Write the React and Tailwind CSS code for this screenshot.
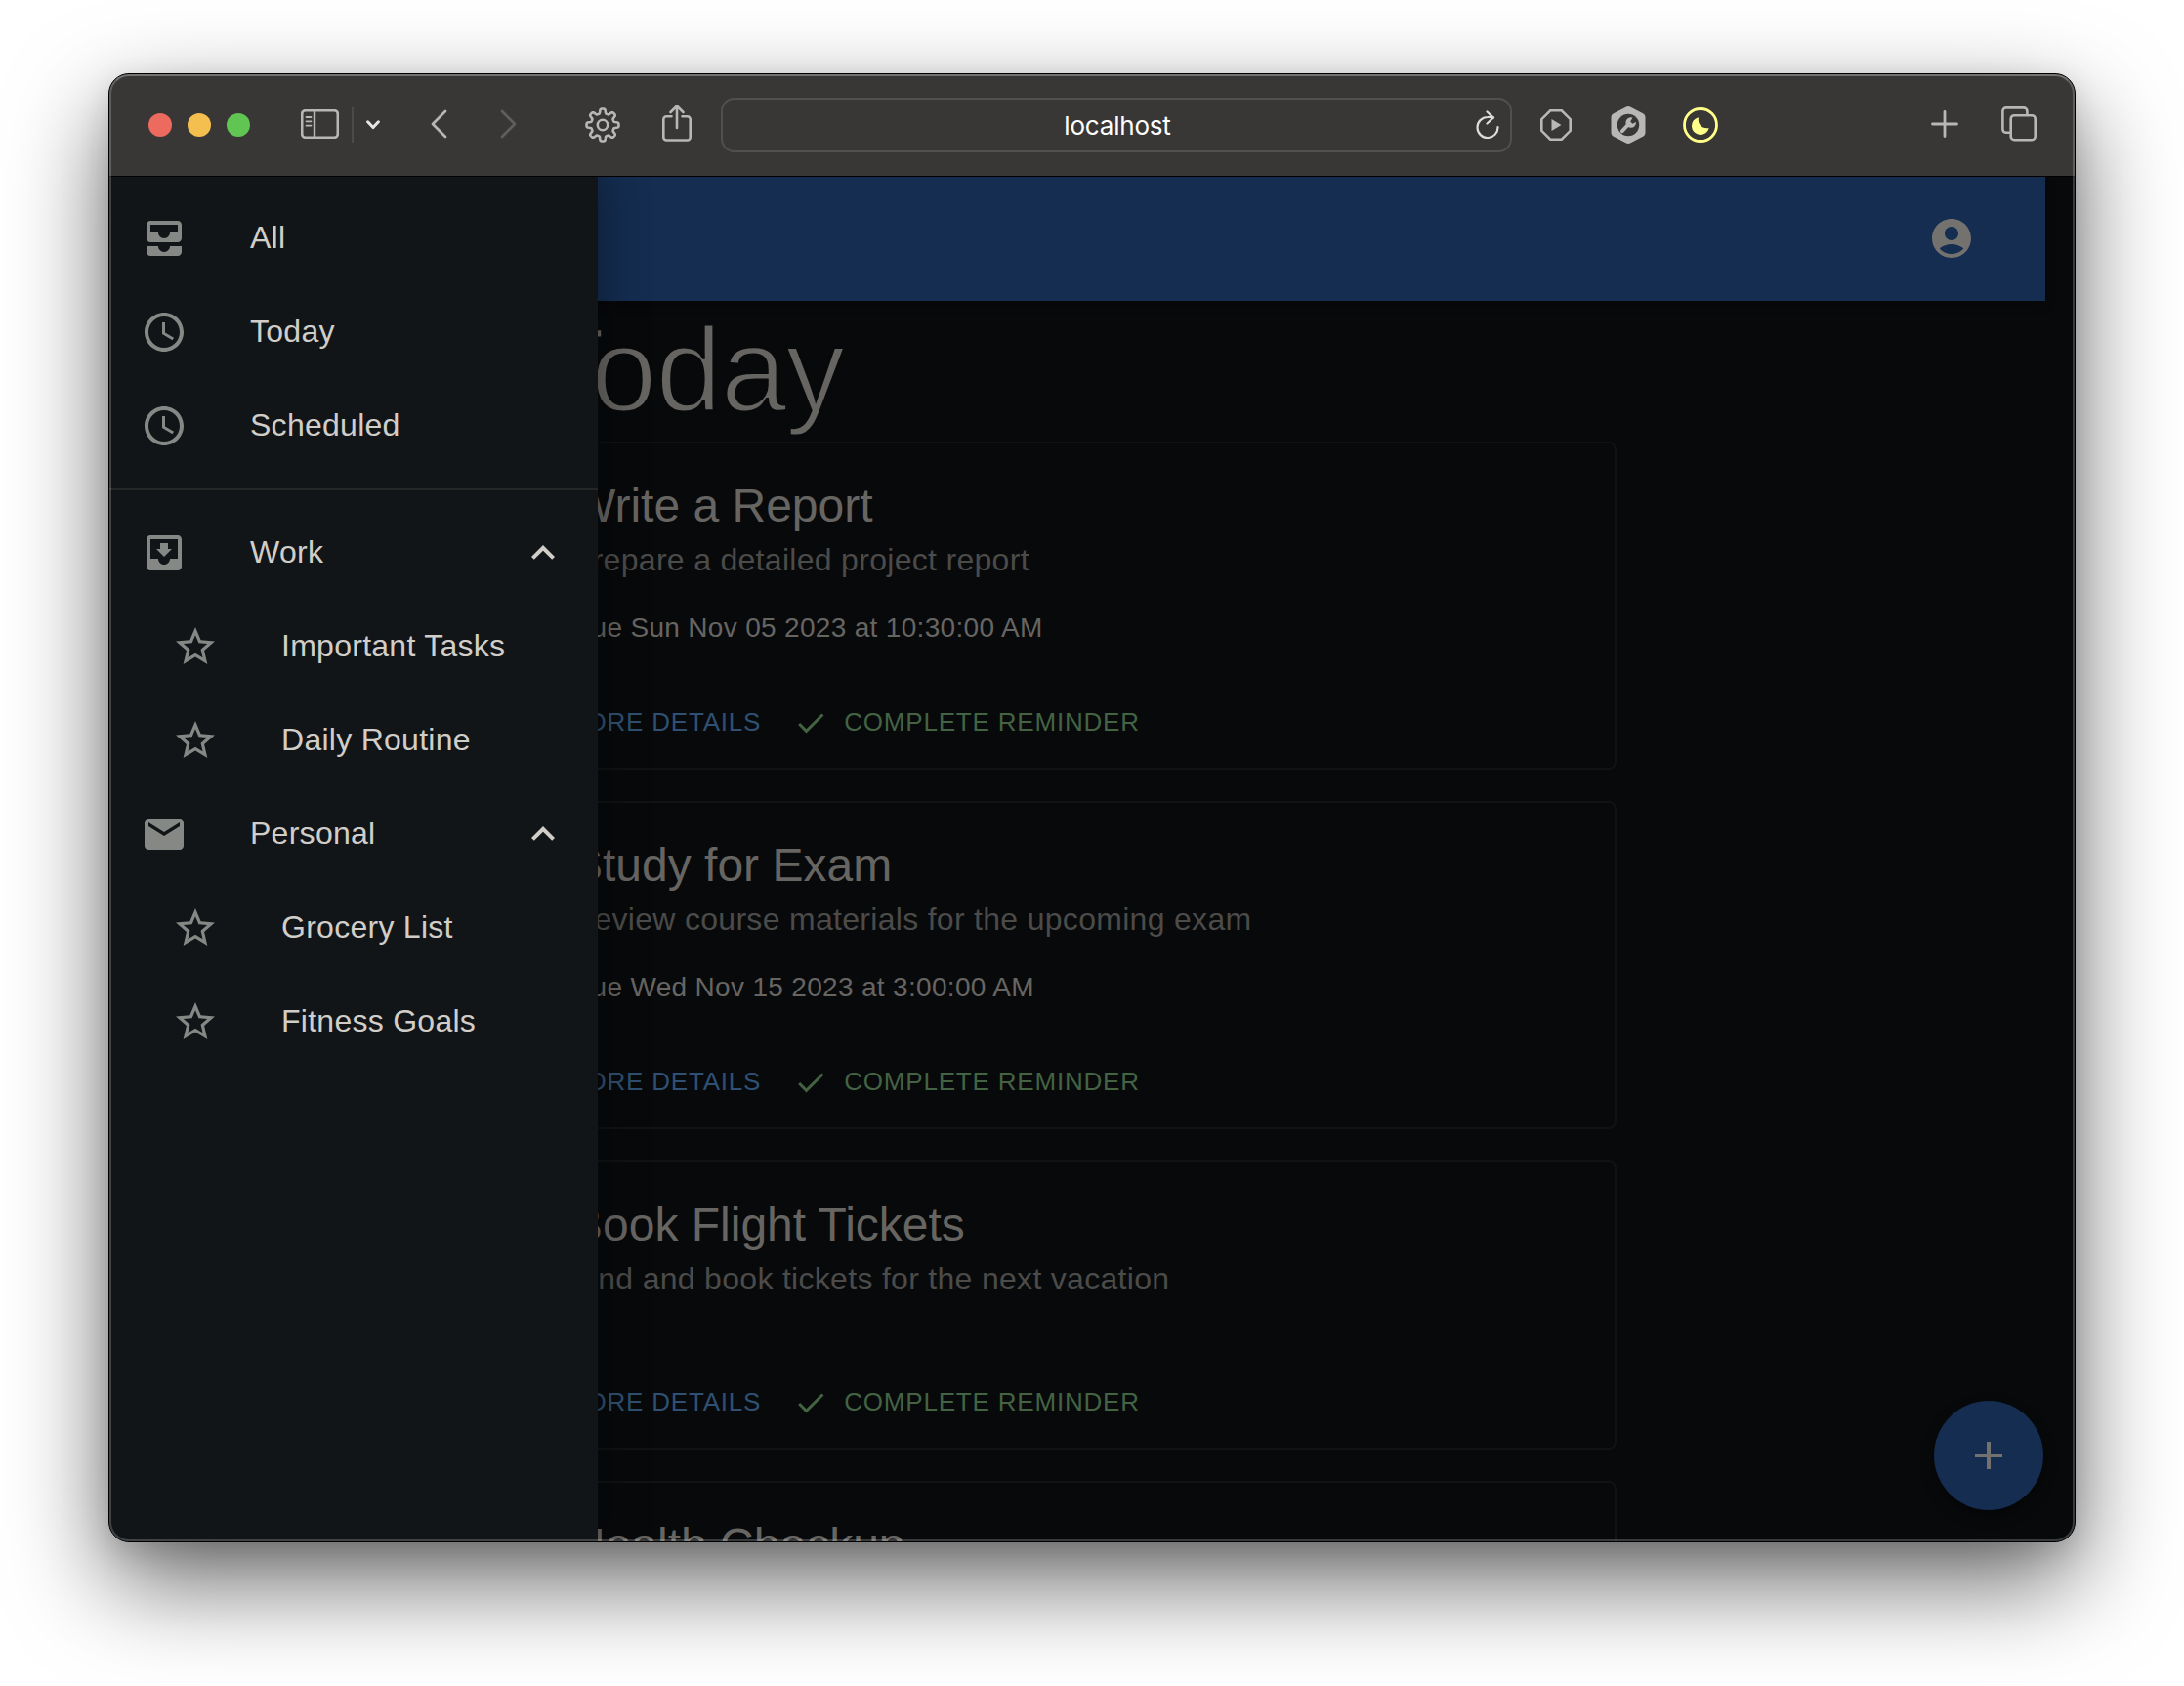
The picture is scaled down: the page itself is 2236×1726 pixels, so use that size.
import React from "react";

const svgBase = { viewBox: "0 0 24 24", fill: "currentColor" };

const paths = {
  allInbox:
    "M19 3H5c-1.1 0-2 .9-2 2v7c0 1.1.9 2 2 2h14c1.1 0 2-.9 2-2V5c0-1.1-.9-2-2-2zm0 6h-4c0 1.62-1.38 3-3 3s-3-1.38-3-3H5V5h14v4zm-4 7h6v3c0 1.1-.9 2-2 2H5c-1.1 0-2-.9-2-2v-3h6c0 1.66 1.34 3 3 3s3-1.34 3-3z",
  clock:
    "M11.99 2C6.47 2 2 6.48 2 12s4.47 10 9.99 10C17.52 22 22 17.52 22 12S17.52 2 11.99 2zM12 20c-4.42 0-8-3.58-8-8s3.58-8 8-8 8 3.58 8 8-3.58 8-8 8zm.5-13H11v6l5.25 3.15.75-1.23-4.5-2.67z",
  moveToInbox:
    "M19 3H4.99c-1.11 0-1.98.9-1.98 2L3 19c0 1.1.88 2 1.99 2H19c1.1 0 2-.9 2-2V5c0-1.1-.9-2-2-2zm0 12h-4c0 1.66-1.35 3-3 3s-3-1.34-3-3H4.99V5H19v10zm-3-5h-2V7h-4v3H8l4 4 4-4z",
  mail: "M20 4H4c-1.1 0-1.99.9-1.99 2L2 18c0 1.1.9 2 2 2h16c1.1 0 2-.9 2-2V6c0-1.1-.9-2-2-2zm0 4l-8 5-8-5V6l8 5 8-5v2z",
  star: "M22 9.24l-7.19-.62L12 2 9.19 8.63 2 9.24l5.46 4.73L5.82 21 12 17.27 18.18 21l-1.63-7.03L22 9.24zM12 15.4l-3.76 2.27 1-4.28-3.32-2.88 4.38-.38L12 6.1l1.71 4.04 4.38.38-3.32 2.88 1 4.28L12 15.4z",
  expandLess: "M12 8l-6 6 1.41 1.41L12 10.83l4.59 4.58L18 14z",
  check: "M9 16.17 4.83 12l-1.42 1.41L9 19 21 7l-1.41-1.41z",
  account:
    "M12 2C6.48 2 2 6.48 2 12s4.48 10 10 10 10-4.48 10-10S17.52 2 12 2zm0 4c1.93 0 3.5 1.57 3.5 3.5S13.93 13 12 13s-3.5-1.57-3.5-3.5S10.07 6 12 6zm0 14c-2.03 0-4.43-.82-6.14-2.88C7.55 15.8 9.68 15 12 15s4.45.8 6.14 2.12C16.43 19.18 14.03 20 12 20z",
  add: "M19 13h-6v6h-2v-6H5v-2h6V5h2v6h6v2z",
};

function Icon({ name, className }) {
  return (
    <svg {...svgBase} className={`shrink-0 ${className}`}>
      <path d={paths[name]} />
    </svg>
  );
}

function gearPath() {
  const pts = [];
  const n = 8;
  for (let i = 0; i < n * 24; i++) {
    const a = (i / (n * 24)) * Math.PI * 2;
    const w = Math.tanh(2.4 * Math.cos(n * a)) / Math.tanh(2.4);
    const r = 14.2 + 2.3 * w;
    pts.push(`${(18 + r * Math.sin(a)).toFixed(2)} ${(18 - r * Math.cos(a)).toFixed(2)}`);
  }
  return `M${pts.join("L")}Z`;
}

function BrowserBar() {
  return (
    <div className="flex h-[104px] shrink-0 items-center bg-[#383735] text-[#b8b7b5]">
      <div className="ml-[40px] flex gap-4">
        <span className="size-6 rounded-full bg-[#ec6a5e]" />
        <span className="size-6 rounded-full bg-[#f4bf4f]" />
        <span className="size-6 rounded-full bg-[#61c554]" />
      </div>
      <svg className="mb-[2px] ml-[52px] h-[30px] w-[39px]" viewBox="0 0 39 30" fill="none" stroke="currentColor">
        <rect x="1.2" y="1.2" width="36.600" height="27.6" rx="3.5" strokeWidth="2.6" />
        <path d="M14 1v28" strokeWidth="2.400" />
        <path d="M5.500 8h5M5.500 12.3h5M5.500 16.600h5" strokeWidth="1.8" strokeLinecap="round" />
      </svg>
      <span className="ml-[13px] h-9 w-[2px] bg-[#4b4a48]" />
      <svg className="ml-[13px] h-[10px] w-[14px] text-[#e6e5e3]" viewBox="0 0 14 10" fill="none" stroke="currentColor" strokeWidth="3" strokeLinecap="round" strokeLinejoin="round">
        <path d="M1.6 1.8 7 7.6l5.4-5.8" />
      </svg>
      <svg className="mb-[2px] ml-[51px] h-[30px] w-[18px]" viewBox="0 0 18 30" fill="none" stroke="currentColor" strokeWidth="2.8" strokeLinecap="round" strokeLinejoin="round">
        <path d="M16 2 3 15l13 13" />
      </svg>
      <svg className="mb-[2px] ml-[54px] h-[30px] w-[18px] text-[#5f5e5c]" viewBox="0 0 18 30" fill="none" stroke="currentColor" strokeWidth="2.8" strokeLinecap="round" strokeLinejoin="round">
        <path d="M2 2l13 13L2 28" />
      </svg>
      <svg className="mb-px ml-[69px] size-[36px]" viewBox="0 0 36 36" fill="none" stroke="currentColor" strokeWidth="2.6">
        <path d={gearPath()} strokeLinejoin="round" />
        <circle cx="18" cy="18" r="5.2" />
      </svg>
      <svg className="mb-[5px] ml-[43px] h-[38px] w-[30px]" viewBox="0 0 30 38" fill="none" stroke="currentColor" strokeWidth="2.6" strokeLinecap="round" strokeLinejoin="round">
        <path d="M9.500 12.2H4.300a3 3 0 0 0-3 3v18.3a3 3 0 0 0 3 3h21.400a3 3 0 0 0 3-3V15.200a3 3 0 0 0-3-3H20.500" />
        <path d="M15 24V2M8.500 8l6.500-6.500L21.500 8" />
      </svg>
      <div className="ml-[30px] flex h-[56px] w-[810px] items-center rounded-[14px] border-2 border-[#50504e] text-white">
        <span className="flex-1 pl-[37px] text-center font-[Inter] text-[26px] tracking-[-0.2px]">localhost</span>
        <svg className="mr-[11px] h-[30px] w-[24px] text-[#dddcda]" viewBox="0 0 24 30" fill="none" stroke="currentColor" strokeWidth="2.200" strokeLinecap="round" strokeLinejoin="round">
          <path d="M18 7.500C16 7 14 6.800 12 7A10.500 10.500 0 1 0 22.500 17" />
          <path d="M11.500 1.500l6.500 6-6.500 6" />
        </svg>
      </div>
      <svg className="ml-[28px] size-[34px]" viewBox="0 0 34 34" fill="none" stroke="currentColor" strokeWidth="2.6">
        <path d="M11.200 2.300h11.600l8.900 8.900v11.600l-8.900 8.900H11.200l-8.900-8.900V11.200z" />
        <path d="M12.500 11v12l10-6z" fill="currentColor" stroke="none" />
      </svg>
      <svg className="ml-[39px] h-[38px] w-[36px]" viewBox="0 0 36 38">
        <path d="M15.500.8a5 5 0 0 1 5 0l13 6.800a4 4 0 0 1 2 3.500v15.800a4 4 0 0 1-2 3.500l-13 6.800a5 5 0 0 1-5 0l-13-6.800a4 4 0 0 1-2-3.500V11.100a4 4 0 0 1 2-3.500z" fill="currentColor" />
        <circle cx="18" cy="19" r="11.200" fill="#383735" />
        <path d="M11.800 25.300 19 17.500" stroke="currentColor" strokeWidth="3.800" strokeLinecap="round" />
        <path d="M22.500 11.500a5.300 5.300 0 1 0 3.500 4.500l-3.600 1.700-2.200-2.200z" fill="currentColor" />
      </svg>
      <svg className="ml-[38px] size-[36px] text-[#ffff8a]" viewBox="0 0 36 36" fill="none" stroke="currentColor" strokeWidth="2.800">
        <circle cx="18" cy="18" r="16.500" />
        <path d="M16 10.200A9 9 0 1 0 26.700 21C20 22.500 14.500 17 16 10.200z" fill="currentColor" stroke="none" />
      </svg>
      <svg className="mb-[3px] ml-auto h-[28px] w-[28px]" viewBox="0 0 28 28" stroke="currentColor" strokeWidth="2.800" strokeLinecap="round">
        <path d="M14 1.500v25M1.500 14h25" />
      </svg>
      <svg className="mr-[39px] mb-[3px] ml-[44px] size-[36px]" viewBox="0 0 36 36" fill="none" stroke="currentColor" strokeWidth="2.600">
        <rect x="9.700" y="9.200" width="25" height="25" rx="3.500" />
        <path d="M9.500 26.800H5a3.600 3.600 0 0 1-3.600-3.600V5A3.600 3.600 0 0 1 5 1.400h17.800A3.600 3.600 0 0 1 26.400 5v4" />
      </svg>
    </div>
  );
}

function NavItem({ icon, label, nested, expandable }) {
  return (
    <li className={`flex h-24 items-center pr-8 ${nested ? "pl-16" : "pl-8"}`}>
      <Icon name={icon} className="size-12 text-[#858885]" />
      <span className="mb-[3px] ml-16 flex-1 text-[32px] leading-[48px] tracking-[0.27px] text-[#d1cec9]">{label}</span>
      {expandable && <Icon name="expandLess" className="size-12 text-[#d1cec9]" />}
    </li>
  );
}

function Drawer() {
  return (
    <nav className="absolute inset-y-0 left-0 w-[500px] bg-[#111517] shadow-[0_0_44px_4px_rgba(0,0,0,0.35)]">
      <ul className="py-4">
        <NavItem icon="allInbox" label="All" />
        <NavItem icon="clock" label="Today" />
        <NavItem icon="clock" label="Scheduled" />
      </ul>
      <div className="h-[2px] bg-[#252727]" />
      <ul className="py-4">
        <NavItem icon="moveToInbox" label="Work" expandable />
        <NavItem icon="star" label="Important Tasks" nested />
        <NavItem icon="star" label="Daily Routine" nested />
        <NavItem icon="mail" label="Personal" expandable />
        <NavItem icon="star" label="Grocery List" nested />
        <NavItem icon="star" label="Fitness Goals" nested />
      </ul>
    </nav>
  );
}

function ReminderCard({ title, description, due }) {
  return (
    <article className="rounded-lg border-2 border-[#101213]">
      <div className="py-8 pr-8 pl-[35px]">
        <h2 className="text-[48px] leading-[64px] text-[#676562]">{title}</h2>
        <p className="-mt-px mb-[25px] text-[32px] leading-[48px] tracking-[0.3px] text-[#4b4b49]">{description}</p>
        {due && <p className="pt-px text-[28px] leading-[39px] tracking-[0.32px] text-[#676562]">{due}</p>}
      </div>
      <div className="flex h-[92px] items-center gap-4 px-4 pb-px text-[26px] tracking-[0.8px]">
        <button className="pr-[10px] pl-[12px] text-[#2f5072]">MORE DETAILS</button>
        <button className="flex items-center px-[10px] text-[#446343]">
          <Icon name="check" className="mr-4 -ml-[3px] size-9" />
          COMPLETE REMINDER
        </button>
      </div>
    </article>
  );
}

const reminders = [
  { title: "Write a Report", description: "Prepare a detailed project report", due: "Due Sun Nov 05 2023 at 10:30:00 AM" },
  { title: "Study for Exam", description: "Review course materials for the upcoming exam", due: "Due Wed Nov 15 2023 at 3:00:00 AM" },
  { title: "Book Flight Tickets", description: "Find and book tickets for the next vacation" },
  { title: "Health Checkup" },
];

export default function App() {
  return (
    <div className="h-[1726px] w-[2236px] overflow-hidden bg-white pt-[75px] pl-[111px] font-['Liberation_Sans',Arial,sans-serif]">
      <div className="relative h-[1504px] w-[2014px] rounded-[21px] shadow-[0_40px_100px_rgba(0,0,0,0.6),0_10px_30px_rgba(0,0,0,0.12)]">
        <div className="flex h-full flex-col overflow-hidden rounded-[21px] border border-black bg-[#08090b]">
          <BrowserBar />
          <div className="relative min-h-0 flex-1 overflow-hidden">
            <header className="mr-[30px] flex h-32 items-center justify-end bg-[#142d50] pr-[72px] shadow-[0_4px_10px_rgba(0,0,0,0.25)]">
              <Icon name="account" className="size-12 text-[#74726f]" />
            </header>
            <main className="ml-[436px] w-[1107px]">
              <h1 className="-ml-[3px] h-36 text-[122px] leading-[142px] tracking-[-1.3px] text-[#676562] [-webkit-text-stroke:3px_#08090b]">Today</h1>
              <div className="flex flex-col gap-8">
                {reminders.map((r) => (
                  <ReminderCard key={r.title} {...r} />
                ))}
              </div>
            </main>
            <button className="absolute right-8 bottom-8 flex size-28 items-center justify-center rounded-full bg-[#142d50] text-[#74726f] shadow-[0_6px_14px_rgba(0,0,0,0.4)]">
              <Icon name="add" className="size-12" />
            </button>
            <Drawer />
            <div className="absolute inset-x-0 top-0 h-px bg-black" />
          </div>
        </div>
        <div className="pointer-events-none absolute inset-px rounded-[20px] border-2 border-white/20 border-t-white/30" />
      </div>
    </div>
  );
}
